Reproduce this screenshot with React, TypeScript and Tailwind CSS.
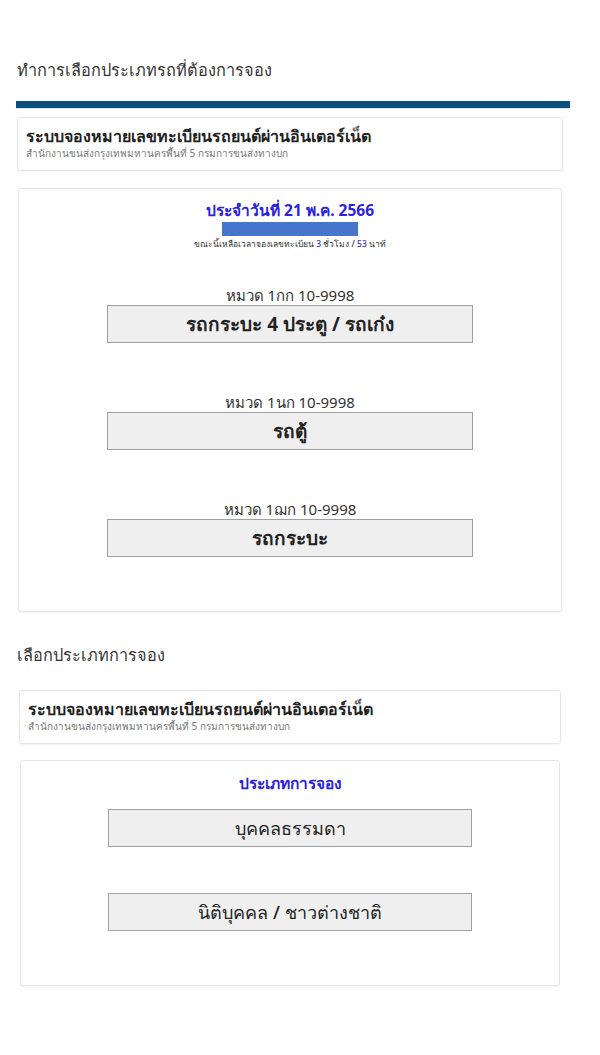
const thai = { fontFamily: 'Tahoma, "Noto Sans", "Liberation Sans", sans-serif' };

function HeaderCard() {
  return (
    <div className="rounded-[3px] border border-[#e6e6e6] shadow-[0_1px_2px_rgba(0,0,0,0.05)] px-[8px] pt-[9px] pb-[10px]">
      <div className="text-[16px] font-bold leading-[19px] text-[#222]">
        ระบบจองหมายเลขทะเบียนรถยนต์ผ่านอินเตอร์เน็ต
      </div>
      <div className="text-[10px] leading-[13px] text-[#777] mt-[1px]">
        สำนักงานขนส่งกรุงเทพมหานครพื้นที่ 5 กรมการขนส่งทางบก
      </div>
    </div>
  );
}

function ChoiceButton({ label, bold = true }: { label: string; bold?: boolean }) {
  return (
    <button
      className={
        bold
          ? "w-[366px] h-[38px] bg-[#efefef] border border-[#a0a0a0] text-[19px] font-bold text-[#222] leading-none"
          : "w-[364px] h-[38px] bg-[#efefef] border border-[#a0a0a0] text-[18px] font-medium text-[#222] leading-none"
      }
    >
      {label}
    </button>
  );
}

function Category({ code, label }: { code: string; label: string }) {
  return (
    <div className="flex flex-col items-center">
      <div className="text-[15px] leading-[20px] text-[#333]">หมวด {code} 10-9998</div>
      <ChoiceButton label={label} />
    </div>
  );
}

export default function App() {
  return (
    <div className="min-h-[1055px] bg-white text-[#333]" style={thai}>
      <div className="pt-[58px] pl-[17px] text-[16.3px] leading-[24px] text-[#333] font-light">
        ทำการเลือกประเภทรถที่ต้องการจอง
      </div>

      <div className="ml-[16px] w-[554px] mt-[19px] h-[8px] bg-[#0d4f7e] border-b border-[#cfe6f5]" />

      <div className="ml-[17px] w-[546px] mt-[8px]">
        <HeaderCard />
      </div>

      <div className="ml-[18px] w-[544px] mt-[17px] h-[424px] rounded-[3px] border border-[#e6e6e6] shadow-[0_1px_2px_rgba(0,0,0,0.05)] flex flex-col items-center pt-[11px]">
        <div className="text-[15.5px] font-bold leading-[20px] text-[#2a22dd]">ประจำวันที่ 21 พ.ค. 2566</div>
        <div className="w-[136px] h-[14px] bg-[#4676cc] mt-[2px]" />
        <div className="text-[8.5px] leading-[14px] mt-[1px] text-[#333] font-medium">
          ขณะนี้เหลือเวลาจองเลขทะเบียน <span className="text-[#3a33cc]">3</span> ชั่วโมง / <span className="text-[#3a33cc]">53</span> นาที
        </div>
        <div className="mt-[34px] flex flex-col gap-[49px]">
          <Category code="1กก" label="รถกระบะ 4 ประตู / รถเก๋ง" />
          <Category code="1นก" label="รถตู้" />
          <Category code="1ฌก" label="รถกระบะ" />
        </div>
      </div>

      <div className="pt-[31px] pl-[17px] text-[16.3px] leading-[24px] text-[#333] font-light">
        เลือกประเภทการจอง
      </div>

      <div className="ml-[19px] w-[542px] mt-[23px]">
        <HeaderCard />
      </div>

      <div className="ml-[20px] w-[540px] mt-[16px] h-[226px] rounded-[3px] border border-[#e6e6e6] shadow-[0_1px_2px_rgba(0,0,0,0.05)] flex flex-col items-center pt-[12px]">
        <div className="text-[15.5px] font-bold leading-[20px] text-[#2a22dd]">ประเภทการจอง</div>
        <div className="mt-[16px] flex flex-col gap-[46px]">
          <ChoiceButton label="บุคคลธรรมดา" bold={false} />
          <ChoiceButton label="นิติบุคคล / ชาวต่างชาติ" bold={false} />
        </div>
      </div>
    </div>
  );
}
